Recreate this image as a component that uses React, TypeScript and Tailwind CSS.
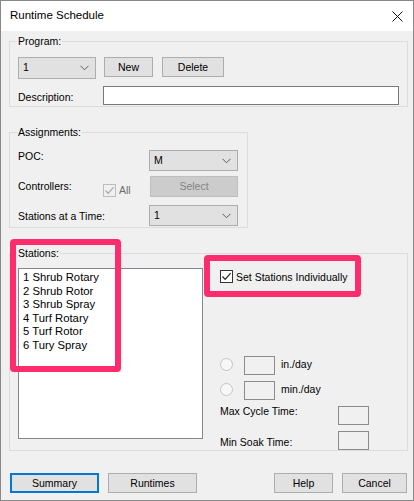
import React from "react";

function Chevron() {
  return (
    <svg width="9" height="6" viewBox="0 0 9 6">
      <path d="M0.5 0.8 L4.5 4.8 L8.5 0.8" fill="none" stroke="#5a5a5a" strokeWidth="1" />
    </svg>
  );
}

function Check({ color }: { color: string }) {
  return (
    <svg width="11" height="11" viewBox="0 0 11 11">
      <path d="M1.5 5.5 L4.2 8.3 L9.6 2.2" fill="none" stroke={color} strokeWidth="1.2" />
    </svg>
  );
}

function GroupLabel({ text }: { text: string }) {
  return (
    <span className="absolute left-[7px] -top-[7px] bg-[#f0f0f0] px-[1px] leading-[12px]">{text}</span>
  );
}

export default function App() {
  return (
    <div className="relative w-[414px] h-[501px] font-['Liberation_Sans',Arial,sans-serif] text-[10.5px] text-black">
      <div className="flex flex-col h-full border border-[#888888] bg-[#f0f0f0]">
        {/* title bar */}
        <div className="flex h-[30px] items-center justify-between bg-white pl-[9px] pr-[10px]">
          <span className="text-[11.5px]">Runtime Schedule</span>
          <svg width="11" height="11" viewBox="0 0 11 11">
            <path d="M0.5 0.5 L10.5 10.5 M10.5 0.5 L0.5 10.5" stroke="#111" strokeWidth="1" />
          </svg>
        </div>

        <div className="flex flex-col pl-[8px] pr-[5px] pt-[10px]">
          {/* Program */}
          <div className="relative h-[66px] border border-[#dcdcdc] pl-[8px] pt-[15px]">
            <GroupLabel text="Program:" />
            <div className="flex items-start">
              <div className="flex h-[22px] w-[78px] items-center justify-between border border-[#adadad] bg-[#e1e1e1] pl-[4px] pr-[6px]">
                <span>1</span>
                <Chevron />
              </div>
              <button className="ml-[8px] h-[20px] w-[49px] border border-[#adadad] bg-[#e1e1e1] leading-[18px]">New</button>
              <button className="ml-[9px] h-[20px] w-[62px] border border-[#adadad] bg-[#e1e1e1] leading-[18px]">Delete</button>
            </div>
            <div className="mt-[7px] flex items-start">
              <span className="w-[85px] pt-[5px] leading-[12px]">Description:</span>
              <div className="h-[19px] w-[296px] border border-[#7a7a7a] bg-white" />
            </div>
          </div>

          {/* Assignments */}
          <div className="relative mt-[25px] h-[96px] w-[239px] border border-[#dcdcdc] pl-[8px] pr-[9px] pt-[17px]">
            <GroupLabel text="Assignments:" />
            <div className="flex h-[21px] items-start">
              <span className="leading-[12px]">POC:</span>
              <div className="ml-auto flex h-[21px] w-[89px] items-center justify-between border border-[#adadad] bg-[#e1e1e1] pl-[4px] pr-[6px]">
                <span>M</span>
                <Chevron />
              </div>
            </div>
            <div className="mt-[5px] flex h-[21px] items-start">
              <span className="w-[85px] pt-[4px] leading-[12px]">Controllers:</span>
              <div className="mt-[8px] flex h-[13px] w-[13px] items-center justify-center border border-[#bcbcbc] bg-[#f0f0f0]">
                <Check color="#a8a8a8" />
              </div>
              <span className="ml-[3px] pt-[8px] leading-[12px] text-[#6d6d6d]">All</span>
              <div className="ml-auto flex h-[21px] w-[88px] items-center justify-center border border-[#bfbfbf] bg-[#cccccc] text-[#838383]">
                Select
              </div>
            </div>
            <div className="mt-[8px] flex h-[21px] items-start">
              <span className="pt-[5px] leading-[12px]">Stations at a Time:</span>
              <div className="ml-auto flex h-[21px] w-[89px] items-center justify-between border border-[#adadad] bg-[#e1e1e1] pl-[4px] pr-[6px]">
                <span>1</span>
                <Chevron />
              </div>
            </div>
          </div>

          {/* Stations */}
          <div className="relative mt-[25px] flex h-[198px] items-start border border-[#dcdcdc] pl-[8px]">
            <GroupLabel text="Stations:" />
            <div className="mt-[14px] flex h-[171px] w-[185px] flex-col border border-[#828790] bg-white pl-[4px] pt-[2px] text-[11.3px] leading-[13.6px]">
              <span>1 Shrub Rotary</span>
              <span>2 Shrub Rotor</span>
              <span>3 Shrub Spray</span>
              <span>4 Turf Rotary</span>
              <span>5 Turf Rotor</span>
              <span>6 Tury Spray</span>
            </div>

            <div className="ml-[17px] flex flex-col">
              <div className="mt-[16px] flex h-[13px] items-center">
                <div className="flex h-[13px] w-[13px] items-center justify-center border border-[#333333] bg-white">
                  <Check color="#222" />
                </div>
                <span className="ml-[3px] leading-[12px]">Set Stations Individually</span>
              </div>

              <div className="mt-[73px] flex h-[19px] items-start">
                <div className="mt-[2px] h-[13px] w-[13px] rounded-full border border-[#c4c4c4] bg-[#f7f7f7]" />
                <div className="ml-[11px] h-[19px] w-[31px] border border-[#8c8c8c] bg-[#f0f0f0]" />
                <span className="ml-[6px] pt-[2px] leading-[12px]">in./day</span>
              </div>
              <div className="mt-[6px] flex h-[19px] items-start">
                <div className="mt-[2px] h-[13px] w-[13px] rounded-full border border-[#c4c4c4] bg-[#f7f7f7]" />
                <div className="ml-[11px] h-[19px] w-[31px] border border-[#8c8c8c] bg-[#f0f0f0]" />
                <span className="ml-[6px] pt-[2px] leading-[12px]">min./day</span>
              </div>

              <div className="mt-[6px] flex h-[19px] items-start">
                <span className="-mt-[1px] w-[118px] leading-[12px]">Max Cycle Time:</span>
                <div className="h-[19px] w-[31px] border border-[#8c8c8c] bg-[#f0f0f0]" />
              </div>
              <div className="mt-[6px] flex h-[19px] items-start">
                <span className="mt-[5px] w-[118px] leading-[12px]">Min Soak Time:</span>
                <div className="h-[19px] w-[31px] border border-[#8c8c8c] bg-[#f0f0f0]" />
              </div>
            </div>
          </div>

          {/* bottom buttons */}
          <div className="ml-[1px] mr-[1px] mt-[22px] flex">
            <button className="h-[20px] w-[89px] border-2 border-[#0078d7] bg-[#e1e1e1] leading-[16px]">Summary</button>
            <button className="ml-[9px] h-[20px] w-[89px] border border-[#adadad] bg-[#e1e1e1] leading-[18px]">Runtimes</button>
            <button className="ml-auto h-[20px] w-[59px] border border-[#adadad] bg-[#e1e1e1] leading-[18px]">Help</button>
            <button className="ml-[9px] h-[20px] w-[65px] border border-[#adadad] bg-[#e1e1e1] leading-[18px]">Cancel</button>
          </div>
        </div>
      </div>

      {/* highlight annotations */}
      <div className="absolute left-[10px] top-[239px] h-[133px] w-[111px] rounded-[4px] border-[6px] border-[#fe2c6c]" />
      <div className="absolute left-[204px] top-[255px] h-[42px] w-[157px] rounded-[4px] border-[6px] border-[#fe2c6c]" />
    </div>
  );
}
